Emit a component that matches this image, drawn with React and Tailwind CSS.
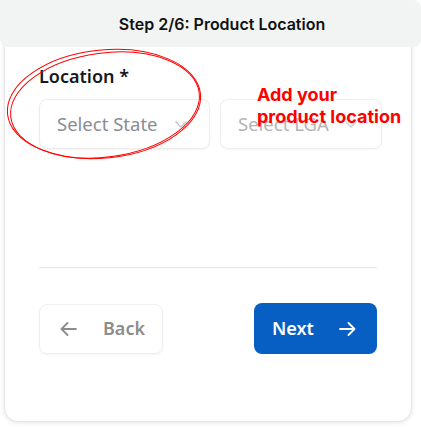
import React from "react";

function Chevron({ className }) {
  return (
    <svg width="12" height="7" viewBox="0 0 12 7" className={className} fill="none">
      <path d="M1 1l5 5 5-5" stroke="currentColor" strokeWidth="1.4" strokeLinecap="round" strokeLinejoin="round" />
    </svg>
  );
}

export default function App() {
  return (
    <div className="relative w-[421px] h-[427px] bg-white font-['Noto_Sans',sans-serif]">
      <div className="relative z-10 h-[47px] bg-[#f2f3f3] rounded-b-lg rounded-tr-lg flex items-center justify-center pl-[23px] font-['Inter',sans-serif] font-semibold text-[16px] text-[#111]">
        Step 2/6: Product Location
      </div>
      <div className="ml-[4px] w-[408px] -mt-[20px] h-[395px] rounded-b-[14px] border border-[#e6e6e6] shadow-[0_1px_4px_rgba(0,0,0,0.10)] bg-white px-[34px] pt-[36px]">
        <div className="text-[18px] leading-[24px] font-semibold text-[#151a22]">Location *</div>
        <div className="mt-[11px] flex gap-[10px]">
          <div className="shrink-0 w-[171px] h-[50px] rounded-lg border border-[#ececec] shadow-[0_1px_2px_rgba(0,0,0,0.05)] flex items-center justify-between pl-[17px] pr-[22px]">
            <span className="text-[18.5px] text-[#8a8d93]">Select State</span>
            <Chevron className="text-[#c4c4c4]" />
          </div>
          <div className="shrink-0 w-[162px] h-[50px] rounded-lg border border-[#efefef] shadow-[0_1px_2px_rgba(0,0,0,0.04)] flex items-center justify-between pl-[17px] pr-[24px]">
            <span className="text-[18.5px] text-[#b4b4b4]">Select LGA</span>
            <Chevron className="text-[#cfcfcf]" />
          </div>
        </div>
        <div className="mt-[118px] h-px bg-[#e6e6e6]" />
        <div className="mt-[35px] flex items-center justify-between">
          <div className="w-[124px] h-[50px] rounded-lg border border-[#efefef] shadow-[0_1px_2px_rgba(0,0,0,0.05)] flex items-center pl-[20px] gap-[26px] text-[#8c8c8c]">
            <svg width="17" height="14" viewBox="0 0 17 14" fill="none">
              <path d="M16 7H1.5M7.5 1L1.5 7l6 6" stroke="currentColor" strokeWidth="1.8" strokeLinecap="round" strokeLinejoin="round" />
            </svg>
            <span className="text-[18px] font-semibold">Back</span>
          </div>
          <div className="w-[123px] h-[51px] rounded-lg bg-[#085fc3] flex items-center pl-[18px] gap-[25px] text-white">
            <span className="text-[18px] font-semibold">Next</span>
            <svg width="17" height="14" viewBox="0 0 17 14" fill="none">
              <path d="M1 7h14.5M9.5 1l6 6-6 6" stroke="currentColor" strokeWidth="1.8" strokeLinecap="round" strokeLinejoin="round" />
            </svg>
          </div>
        </div>
      </div>
      <div className="absolute left-[257px] top-[84px] z-20 font-['Inter',sans-serif] font-bold text-[18px] leading-[22px] text-[#ff0000]">
        Add your
        <br />
        product location
      </div>
      <svg className="absolute left-0 top-0 z-20 pointer-events-none" width="421" height="427" viewBox="0 0 421 427" fill="none">
        <ellipse cx="104" cy="104" rx="97" ry="54" transform="rotate(-6 104 104)" stroke="#ff0000" strokeWidth="1" />
        <ellipse cx="105" cy="105" rx="95" ry="52" transform="rotate(-7.5 105 105)" stroke="#ff0000" strokeWidth="1" />
      </svg>
    </div>
  );
}
